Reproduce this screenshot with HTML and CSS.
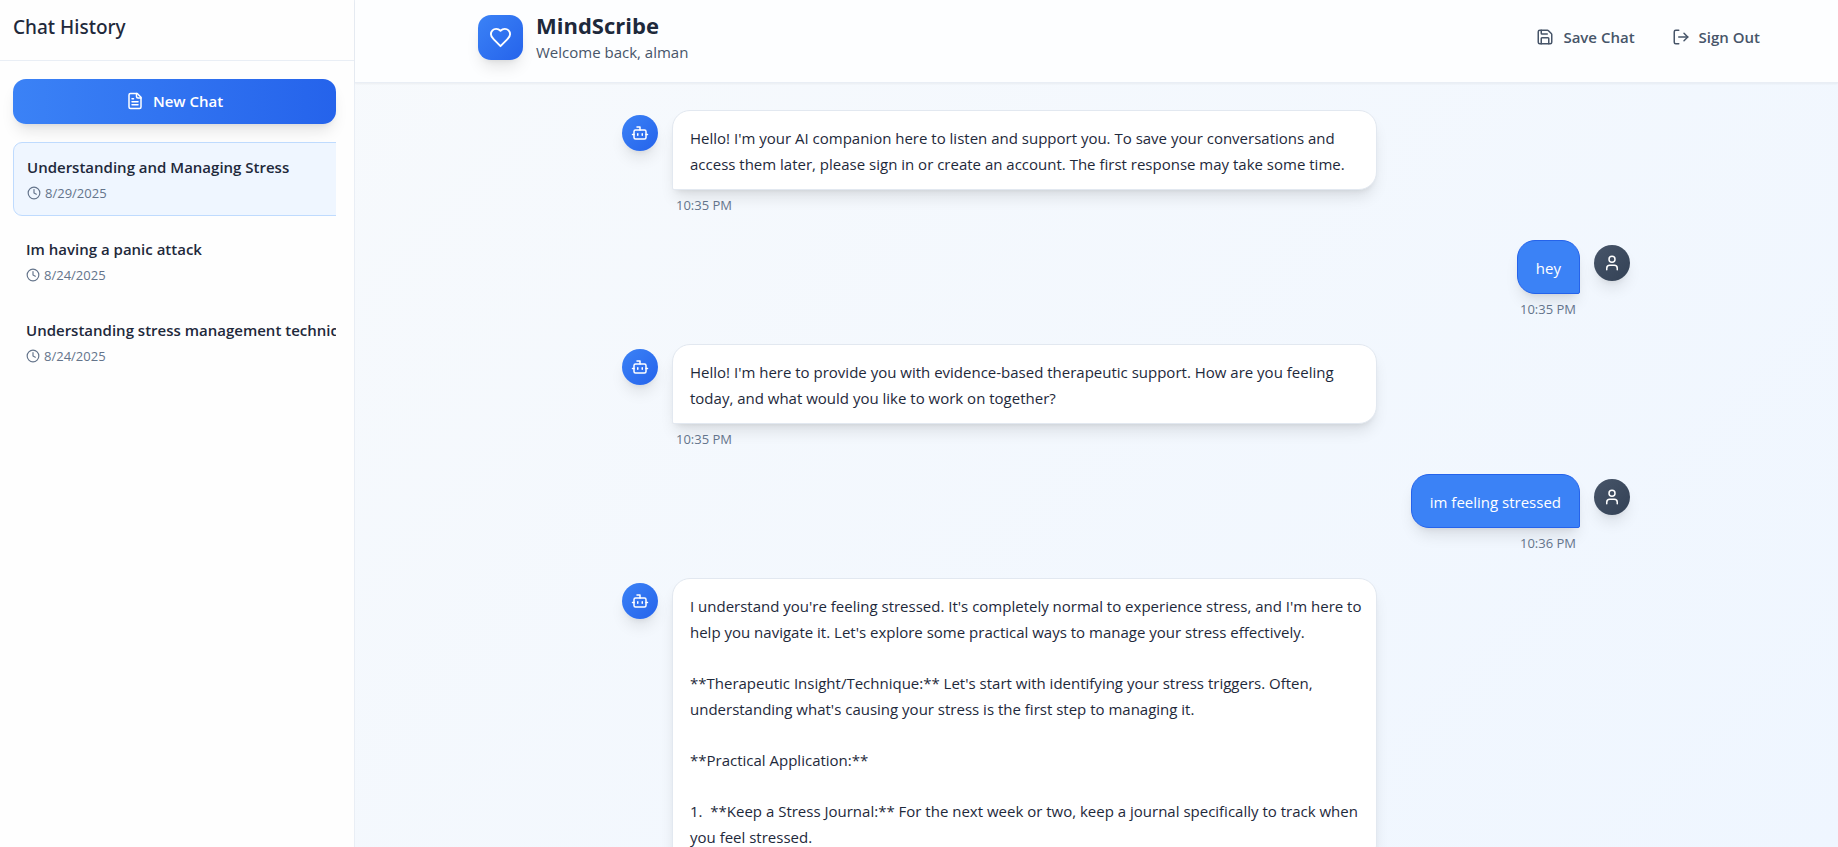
FILE: index.html
```html
<!DOCTYPE html>
<html lang="en">
<head>
<meta charset="utf-8">
<meta name="viewport" content="width=device-width, initial-scale=1">
<title>MindScribe</title>
<link rel="stylesheet" href="styles.css">
</head>
<body>
<svg class="sprite" aria-hidden="true">
  <symbol id="file-text" viewBox="0 0 24 24"><path d="M15 2H6a2 2 0 0 0-2 2v16a2 2 0 0 0 2 2h12a2 2 0 0 0 2-2V7Z"/><path d="M14 2v4a2 2 0 0 0 2 2h4"/><path d="M10 9H8"/><path d="M16 13H8"/><path d="M16 17H8"/></symbol>
  <symbol id="clock" viewBox="0 0 24 24"><circle cx="12" cy="12" r="10"/><path d="M12 6v6l4 2"/></symbol>
  <symbol id="heart" viewBox="0 0 24 24"><path d="M19 14c1.49-1.46 3-3.21 3-5.5A5.5 5.5 0 0 0 16.5 3c-1.76 0-3 .5-4.5 2-1.5-1.5-2.74-2-4.5-2A5.5 5.5 0 0 0 2 8.5c0 2.3 1.5 4.05 3 5.5l7 7Z"/></symbol>
  <symbol id="save" viewBox="0 0 24 24"><path d="M15.2 3a2 2 0 0 1 1.4.6l3.8 3.8a2 2 0 0 1 .6 1.4V19a2 2 0 0 1-2 2H5a2 2 0 0 1-2-2V5a2 2 0 0 1 2-2z"/><path d="M17 21v-7a1 1 0 0 0-1-1H8a1 1 0 0 0-1 1v7"/><path d="M7 3v4a1 1 0 0 0 1 1h7"/></symbol>
  <symbol id="log-out" viewBox="0 0 24 24"><path d="M9 21H5a2 2 0 0 1-2-2V5a2 2 0 0 1 2-2h4"/><path d="m16 17 5-5-5-5"/><path d="M21 12H9"/></symbol>
  <symbol id="bot" viewBox="0 0 24 24"><path d="M12 8V4H8"/><rect width="16" height="12" x="4" y="8" rx="2"/><path d="M2 14h2"/><path d="M20 14h2"/><path d="M15 13v2"/><path d="M9 13v2"/></symbol>
  <symbol id="user" viewBox="0 0 24 24"><path d="M19 21v-2a4 4 0 0 0-4-4H9a4 4 0 0 0-4 4v2"/><circle cx="12" cy="7" r="4"/></symbol>
</svg>

<div class="app">
  <aside class="sidebar">
    <div class="sidebar-head"><h2 class="sidebar-title">Chat History</h2></div>
    <div class="sidebar-body">
      <button class="new-chat" type="button"><svg class="icon icon-md"><use href="#file-text"/></svg>New Chat</button>
      <nav class="history" aria-label="Chat history">
        <button class="session session-active" type="button">
          <span class="session-title">Understanding and Managing Stress</span>
          <span class="session-date"><svg class="icon icon-sm"><use href="#clock"/></svg>8/29/2025</span>
        </button>
        <button class="session" type="button">
          <span class="session-title">Im having a panic attack</span>
          <span class="session-date"><svg class="icon icon-sm"><use href="#clock"/></svg>8/24/2025</span>
        </button>
        <button class="session" type="button">
          <span class="session-title">Understanding stress management techniques</span>
          <span class="session-date"><svg class="icon icon-sm"><use href="#clock"/></svg>8/24/2025</span>
        </button>
      </nav>
    </div>
  </aside>

  <div class="main">
    <header class="topbar">
      <div class="topbar-inner">
        <div class="brand">
          <div class="logo"><svg class="icon icon-lg"><use href="#heart"/></svg></div>
          <div>
            <h1 class="brand-name">MindScribe</h1>
            <p class="welcome">Welcome back, alman</p>
          </div>
        </div>
        <div class="actions">
          <button class="action" type="button"><svg class="icon icon-md"><use href="#save"/></svg>Save Chat</button>
          <button class="action" type="button"><svg class="icon icon-md"><use href="#log-out"/></svg>Sign Out</button>
        </div>
      </div>
    </header>

    <main class="chat">
      <div class="thread">
        <article class="message">
          <div class="avatar avatar-bot"><svg class="icon icon-md"><use href="#bot"/></svg></div>
          <div class="content">
            <div class="bubble"><p>Hello! I'm your AI companion here to listen and support you. To save your conversations and access them later, please sign in or create an account. The first response may take some time.</p></div>
            <time class="time">10:35 PM</time>
          </div>
        </article>
        <article class="message message-user">
          <div class="avatar avatar-user"><svg class="icon icon-md"><use href="#user"/></svg></div>
          <div class="content">
            <div class="bubble"><p>hey</p></div>
            <time class="time">10:35 PM</time>
          </div>
        </article>
        <article class="message">
          <div class="avatar avatar-bot"><svg class="icon icon-md"><use href="#bot"/></svg></div>
          <div class="content">
            <div class="bubble"><p>Hello! I'm here to provide you with evidence-based therapeutic support. How are you feeling today, and what would you like to work on together?</p></div>
            <time class="time">10:35 PM</time>
          </div>
        </article>
        <article class="message message-user">
          <div class="avatar avatar-user"><svg class="icon icon-md"><use href="#user"/></svg></div>
          <div class="content">
            <div class="bubble"><p>im feeling stressed</p></div>
            <time class="time">10:36 PM</time>
          </div>
        </article>
        <article class="message">
          <div class="avatar avatar-bot"><svg class="icon icon-md"><use href="#bot"/></svg></div>
          <div class="content">
            <div class="bubble">
              <p>I understand you're feeling stressed. It's completely normal to experience stress, and I'm here to help you navigate it. Let's explore some practical ways to manage your stress effectively.</p>
              <p>**Therapeutic Insight/Technique:** Let's start with identifying your stress triggers. Often, understanding what's causing your stress is the first step to managing it.</p>
              <p>**Practical Application:**</p>
              <p>1.&nbsp; **Keep a Stress Journal:** For the next week or two, keep a journal specifically to track when you feel stressed.</p>
            </div>
          </div>
        </article>
      </div>
    </main>
  </div>
</div>
</body>
</html>
```

FILE: styles.css
```css
* { box-sizing: border-box; }

body {
  margin: 0;
  font-family: "Open Sans", "Noto Sans", sans-serif;
  font-size: 15px;
  line-height: 26px;
  color: #1e293b;
}

h1, h2, p { margin: 0; }

button {
  font: inherit;
  color: inherit;
  border: 0;
  background: none;
  cursor: pointer;
}

.sprite { display: none; }

.icon {
  flex: none;
  fill: none;
  stroke: currentColor;
  stroke-width: 2;
  stroke-linecap: round;
  stroke-linejoin: round;
}
.icon-sm { width: 14px; height: 14px; }
.icon-md { width: 18px; height: 18px; }
.icon-lg { width: 23px; height: 23px; }

.app {
  display: flex;
  height: 100vh;
  overflow: hidden;
  background: linear-gradient(135deg, #f8fafc, #eff6ff);
}

/* Sidebar */
.sidebar {
  flex: none;
  width: 355px;
  background: #fefefe;
  border-right: 1px solid #e9eef5;
}
.sidebar-head {
  padding: 13px 13px 19px;
  border-bottom: 1px solid #e9eef5;
}
.sidebar-title {
  font-family: "Noto Sans", sans-serif;
  font-size: 19px;
  line-height: 28px;
  font-weight: 500;
}
.sidebar-body {
  padding: 18px 18px 18px 13px;
}
.new-chat {
  display: flex;
  align-items: center;
  justify-content: center;
  gap: 9px;
  width: 100%;
  padding: 9px 14px 10px;
  border-radius: 13px;
  background: linear-gradient(90deg, #3b82f6, #2563eb);
  box-shadow: 0 10px 15px -3px rgba(0, 0, 0, .1), 0 4px 6px -4px rgba(0, 0, 0, .1);
  color: #fff;
  font-weight: 600;
}
.history {
  display: grid;
  grid-template-columns: minmax(100%, max-content);
  gap: 9px;
  margin-top: 18px;
  overflow: hidden;
}
.session {
  display: grid;
  gap: 3px;
  min-width: 380px;
  padding: 11px 13px 12px;
  border-radius: 9px;
  text-align: left;
  white-space: nowrap;
}
.session-active {
  background: #eff6ff;
  border: 1px solid #bfdbfe;
}
.session-title { font-weight: 600; }
.session-date {
  display: flex;
  align-items: center;
  gap: 4px;
  font-size: 13px;
  line-height: 20px;
  color: #64748b;
}

/* Header */
.main {
  display: flex;
  flex: 1;
  flex-direction: column;
  min-width: 0;
}
.topbar {
  flex: none;
  padding: 0 0 0 59px;
  background: #fdfeff;
  border-bottom: 1px solid #e9eef5;
  box-shadow: 0 1px 2px rgba(0, 0, 0, .05);
}
.topbar-inner {
  display: flex;
  align-items: center;
  justify-content: space-between;
  max-width: 1296px;
  margin: 0 auto;
  padding: 10px 0 17px;
}
.brand {
  display: flex;
  align-items: center;
  gap: 13px;
}
.logo {
  display: grid;
  place-items: center;
  width: 45px;
  height: 45px;
  border-radius: 13px;
  background: linear-gradient(135deg, #3b82f6, #2563eb);
  box-shadow: 0 10px 15px -3px rgba(0, 0, 0, .1), 0 4px 6px -4px rgba(0, 0, 0, .1);
  color: #fff;
}
.brand-name {
  font-size: 22px;
  line-height: 30px;
  font-weight: 700;
}
.welcome {
  line-height: 25px;
  color: #475569;
}
.actions {
  display: flex;
  gap: 9px;
}
.action {
  display: flex;
  align-items: center;
  gap: 9px;
  padding: 8px 14px 9px;
  color: #475569;
  font-weight: 600;
}

/* Conversation */
.chat {
  flex: 1;
  min-height: 0;
  padding: 27px 0 0 59px;
  overflow: hidden;
}
.thread {
  display: grid;
  gap: 26px;
  max-width: 1008px;
  margin: 0 auto;
}
.message {
  display: flex;
  align-items: flex-start;
  gap: 14px;
}
.message-user { flex-direction: row-reverse; }
.avatar {
  display: grid;
  flex: none;
  place-items: center;
  width: 36px;
  height: 36px;
  margin-top: 5px;
  border-radius: 50%;
  box-shadow: 0 10px 15px -3px rgba(0, 0, 0, .1), 0 4px 6px -4px rgba(0, 0, 0, .1);
  color: #fff;
}
.avatar-bot { background: linear-gradient(135deg, #3b82f6, #2563eb); }
.avatar-user { background: linear-gradient(135deg, #475569, #334155); }
.content {
  display: flex;
  flex-direction: column;
  align-items: flex-start;
  max-width: 705px;
}
.message-user .content { align-items: flex-end; }
.bubble {
  padding: 14px 9px 12px 17px;
  border: 1px solid #e2e8f0;
  border-radius: 18px 18px 18px 2px;
  background: #fff;
  box-shadow: 0 10px 15px -3px rgba(0, 0, 0, .1), 0 4px 6px -4px rgba(0, 0, 0, .1);
}
.bubble p + p { margin-top: 25px; }
.message-user .bubble {
  padding: 14px 18px 12px;
  border-color: #2563eb;
  border-radius: 18px 18px 2px 18px;
  background: #3b82f6;
  color: #fff;
}
.time {
  margin-top: 6px;
  padding: 0 4px;
  font-size: 13px;
  line-height: 18px;
  color: #64748b;
}
```
